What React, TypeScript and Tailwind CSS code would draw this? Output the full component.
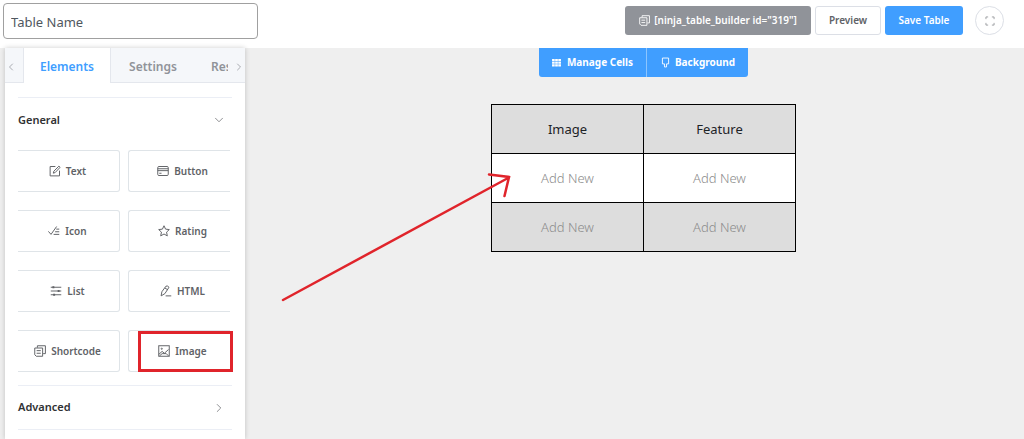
import type { ReactNode } from "react";
import clsx from "clsx";
import { ChevronDown, ChevronLeft, ChevronRight } from "lucide-react";

const icons: Record<string, ReactNode> = {
  text: (
    <>
      <path d="M8.5 2H1.5v12.5h12.5V7.5" />
      <path d="M13.2 1.5l1.6 1.6-6.6 7-2.5.8.7-2.6z" />
    </>
  ),
  button: (
    <>
      <rect x="1" y="2" width="14" height="12" rx="1.5" />
      <path d="M1 5h14M1 7.5h14M3 11h3" />
    </>
  ),
  icon: (
    <>
      <path d="M.5 8.5l3.5 4 7.5-10.5" />
      <path d="M11 5.5h4M9.5 9h5.5M7.5 12.5h7.5" />
    </>
  ),
  rating: <path d="M8 1l2.1 4.5 5 .6-3.7 3.4 1 5L8 12l-4.4 2.5 1-5L.9 6.1l5-.6z" />,
  list: (
    <>
      <path d="M1 3h14M1 8h14M1 13h14" />
      <path d="M4.5 1.6v2.8M11.5 6.6v2.8M5.5 11.6v2.8" strokeWidth="2.6" />
    </>
  ),
  html: (
    <>
      <path d="M2.5 9L8 1.5q2-1 4 1.5L6.5 11.5l-5 3zM6.5 4l4 2.5" />
      <path d="M7.5 14.5H15" />
    </>
  ),
  shortcode: (
    <>
      <path d="M4.5 3.5V1h10.7v10.5h-3" />
      <path d="M1 4h10.5v11H3l-2-2z" />
      <path d="M3.5 7.5h5.5M3.5 11h5.5" />
    </>
  ),
  image: (
    <>
      <rect x="1" y="1" width="14" height="14" />
      <path d="M1 12.5l4.5-4 3 2.5 5.5-5M2 14.5l3.5-3h5.5l3 3" />
      <circle cx="5" cy="5" r=".8" />
    </>
  ),
  brush: <path d="M3.5 1.5h9v8.5h-3v4.5h-3V10h-3z" />,
  expand: <path d="M1.5 5V1.5H5M11 1.5h3.5V5M14.5 11v3.5H11M5 14.5H1.5V11" />,
};

function Icon({ name, className = "size-3" }: { name: string; className?: string }) {
  return (
    <svg
      viewBox="0 0 16 16"
      fill="none"
      stroke="currentColor"
      strokeWidth="1.3"
      aria-hidden="true"
      className={clsx("shrink-0", className)}
    >
      {icons[name]}
    </svg>
  );
}

function GridIcon() {
  return (
    <svg viewBox="0 0 10 9" fill="currentColor" aria-hidden="true" className="h-2 w-[9px]">
      {[0, 3, 6].map((y) => (
        <path key={y} d={`M0 ${y}h3v2.4H0zM3.5 ${y}h3v2.4h-3zM7 ${y}h3v2.4H7z`} />
      ))}
    </svg>
  );
}

const elements = [
  ["text", "Text"],
  ["button", "Button"],
  ["icon", "Icon"],
  ["rating", "Rating"],
  ["list", "List"],
  ["html", "HTML"],
  ["shortcode", "Shortcode"],
  ["image", "Image"],
];

const rows = [
  ["Add New", "Add New"],
  ["Add New", "Add New"],
];

function Header() {
  return (
    <header className="flex h-12 items-start justify-between bg-white pr-5 pl-[3px]">
      <input
        type="text"
        aria-label="Table name"
        defaultValue="Table Name"
        className="mt-[3px] h-9 w-[255px] rounded border border-[#a0a0a0] px-[7px] pt-0.5 text-[13px] text-[#50575e] outline-none"
      />
      <div className="mt-1.5 flex items-center gap-1 text-[10px] font-semibold">
        <button className="flex h-[29px] w-[186px] items-center justify-center gap-1 rounded-[3px] bg-[#909399] text-white">
          <Icon name="shortcode" className="size-[11px]" />
          [ninja_table_builder id="319"]
        </button>
        <button className="h-[29px] w-[66px] rounded-[3px] border border-[#dcdfe6] bg-white text-[#606266]">Preview</button>
        <button className="h-[29px] w-[78px] rounded-[3px] bg-[#409eff] text-white">Save Table</button>
        <button
          aria-label="Full screen"
          className="ml-2 flex size-[29px] items-center justify-center rounded-full border border-[#dcdfe6] text-[#8c8f94]"
        >
          <Icon name="expand" className="size-2.5" />
        </button>
      </div>
    </header>
  );
}

function Sidebar() {
  return (
    <aside className="w-60 shrink-0 bg-white shadow-[0_0_5px_rgba(0,0,0,0.2)]">
      <div className="flex h-[35px] bg-[#f5f7fa] text-[12px] font-semibold text-[#909399]">
        <button aria-label="Previous tab" className="flex w-[19px] items-center border-r border-b border-[#e4e7ed] pt-1">
          <ChevronLeft size={12} strokeWidth={1.5} />
        </button>
        <button className="w-[86px] bg-white pt-0.5 text-[#409eff]">Elements</button>
        <button className="w-[85px] border-b border-l border-[#e4e7ed] pt-1">Settings</button>
        <button className="flex-1 overflow-hidden border-b border-[#e4e7ed] pt-1 pl-4 text-left">
          <span className="block w-[17px] overflow-hidden">Res</span>
        </button>
        <button aria-label="Next tab" className="flex w-3 items-center border-b border-[#e4e7ed] pt-1">
          <ChevronRight size={12} strokeWidth={1.5} />
        </button>
      </div>

      <div className="px-[13px] pt-3.5">
        <button className="flex h-[45px] w-full items-center justify-between border-t border-[#ebeef5] pr-1.5 text-[11px] font-semibold text-[#303133]">
          General
          <ChevronDown size={14} strokeWidth={1.2} className="text-[#606266]" />
        </button>
        <div className="mt-2 grid grid-cols-2 gap-x-2 gap-y-[18px] pr-0.5">
          {elements.map(([icon, label], i) => (
            <button
              key={icon}
              className={clsx(
                "relative flex h-[42px] items-center justify-center gap-[5px] border-y border-[#dfe4e8] text-[10px] font-semibold text-[#606266]",
                i % 2 === 0 ? "rounded-r-[3px] border-r pr-0.5" : "rounded-l-[3px] border-l pl-1.5"
              )}
            >
              <Icon name={icon} />
              {label}
              {icon === "image" && (
                <span className="absolute top-0 -right-[3px] h-[41px] w-[95px] border-[3px] border-[#e0242b]" />
              )}
            </button>
          ))}
        </div>
        <button className="mt-[13px] flex h-[45px] w-full items-center justify-between border-y border-[#ebeef5] pr-1.5 text-[11px] font-semibold text-[#303133]">
          Advanced
          <ChevronRight size={14} strokeWidth={1.2} className="text-[#606266]" />
        </button>
      </div>
    </aside>
  );
}

function Arrow() {
  return (
    <svg
      viewBox="0 0 236 136"
      fill="none"
      stroke="#e0242b"
      strokeWidth="2.5"
      strokeLinecap="round"
      aria-hidden="true"
      className="pointer-events-none absolute top-[64px] right-[280px] h-[136px] w-[236px]"
    >
      <path d="M3 132L229 9.5M209 6.5L229 9L224.5 28" />
    </svg>
  );
}

function Canvas() {
  return (
    <main className="flex flex-1 flex-col items-center pl-[18px]">
      <div className="flex h-[29px] overflow-hidden rounded-b-[3px] bg-[#409eff] text-[10px] font-bold text-white">
        <button className="flex w-[108px] items-center justify-center gap-1.5 border-r border-[#8cc5ff]">
          <GridIcon />
          Manage Cells
        </button>
        <button className="flex w-[101px] items-center justify-center gap-1">
          <Icon name="brush" className="size-[11px]" />
          Background
        </button>
      </div>
      <div className="relative mt-[27px]">
        <table className="w-[305px] table-fixed border-collapse text-center text-[13px]">
          <thead>
            <tr className="h-[49px] bg-[#dddddd] text-[#1d2327]">
              <th className="border border-black pt-0.5 font-normal">Image</th>
              <th className="border border-black pt-0.5 font-normal">Feature</th>
            </tr>
          </thead>
          <tbody>
            {rows.map((row, i) => (
              <tr key={i} className={clsx("h-[49px] font-light text-[#8c8c8c]", i % 2 === 0 ? "bg-white" : "bg-[#dddddd]")}>
                {row.map((cell, j) => (
                  <td key={j} className="border border-black pt-0.5">{cell}</td>
                ))}
              </tr>
            ))}
          </tbody>
        </table>
        <Arrow />
      </div>
    </main>
  );
}

export default function App() {
  return (
    <div className="flex min-h-screen flex-col bg-[#efefef] font-['Noto_Sans','Open_Sans',sans-serif]">
      <Header />
      <div className="flex flex-1 pl-[5px]">
        <Sidebar />
        <Canvas />
      </div>
    </div>
  );
}
